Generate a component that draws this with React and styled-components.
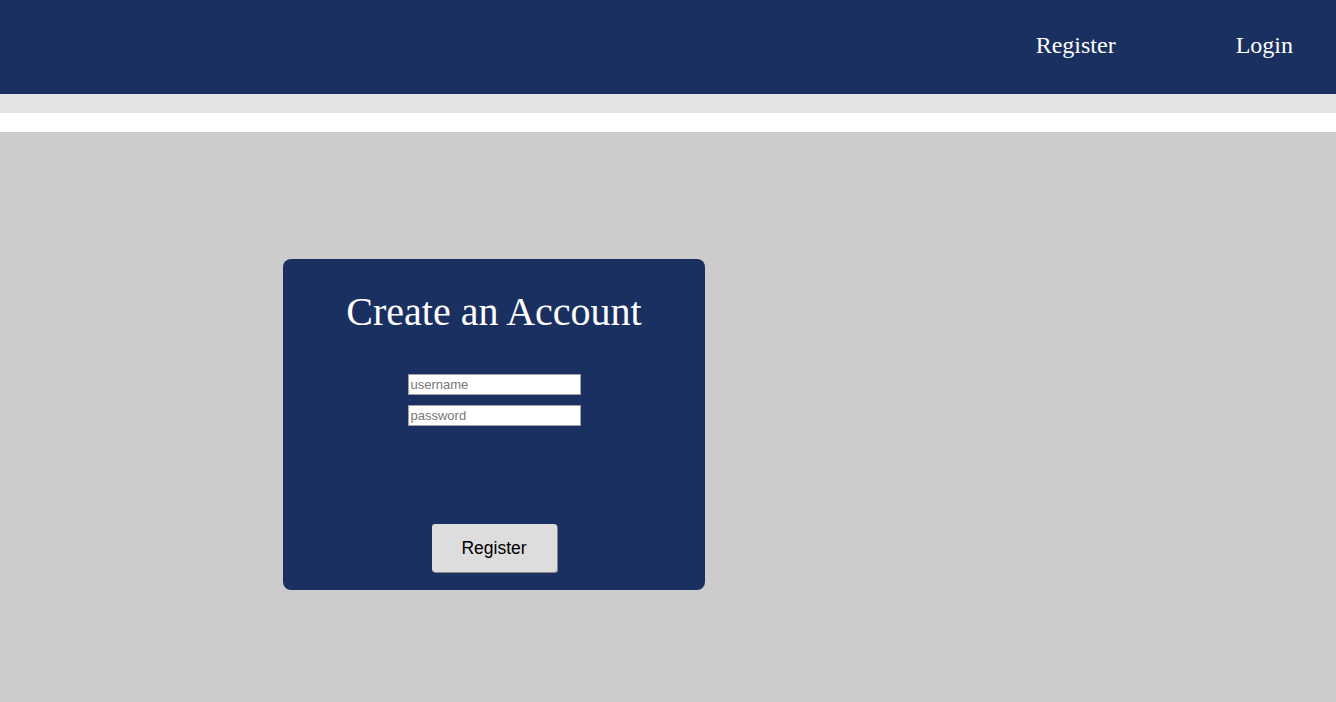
import React from 'react';
import styled, { createGlobalStyle } from 'styled-components';

const GlobalStyle = createGlobalStyle`
  html, body {
    margin: 0;
    padding: 0;
    background: #cccccc;
    font-family: "Liberation Serif", "Times New Roman", serif;
  }
`;

const App = () => {
  return (
    <>
      <GlobalStyle />
      <Header>
        <NavLink>Register</NavLink>
        <NavLink>Login</NavLink>
      </Header>
      <GreyStrip />
      <WhiteStrip />
      <Main>
        <Card>
          <Title>Create an Account</Title>
          <Fields>
            <Input type="text" placeholder="username" />
            <Input type="password" placeholder="password" />
          </Fields>
          <SubmitButton>Register</SubmitButton>
        </Card>
      </Main>
    </>
  );
};

export default App;

const Header = styled.header`
  display: flex;
  justify-content: flex-end;
  align-items: center;
  gap: 120px;
  height: 94px;
  padding: 0 43px 4px 0;
  box-sizing: border-box;
  background: #1a3061;
`;

const NavLink = styled.a`
  color: #ffffff;
  font-size: 24px;
  cursor: pointer;
`;

const GreyStrip = styled.div`
  height: 19px;
  background: #e4e4e4;
`;

const WhiteStrip = styled.div`
  height: 19px;
  background: #ffffff;
`;

const Main = styled.main`
  display: flex;
  min-height: 570px;
  padding: 127px 0 0 283px;
  box-sizing: border-box;
  background: #cccccc;
`;

const Card = styled.section`
  display: flex;
  flex-direction: column;
  align-items: center;
  width: 422px;
  height: 331px;
  padding-top: 30px;
  box-sizing: border-box;
  background: #1a3061;
  border-radius: 8px;
`;

const Title = styled.h2`
  margin: 0;
  color: #ffffff;
  font-size: 40px;
  font-weight: 400;
  line-height: 46px;
`;

const Fields = styled.div`
  display: flex;
  flex-direction: column;
  gap: 10px;
  margin-top: 39px;
`;

const Input = styled.input`
  width: 173px;
  height: 21px;
  box-sizing: border-box;
  padding: 1px 2px;
  border: 1px solid #a0a0a0;
  background: #ffffff;
  font-family: "Liberation Sans", Arial, sans-serif;
  font-size: 13px;
  outline: none;

  &::placeholder {
    color: #777777;
  }
`;

const SubmitButton = styled.button`
  margin-top: 98px;
  width: 125px;
  height: 48px;
  border: none;
  border-radius: 3px;
  background: #dddddd;
  box-shadow: 1px 1px 0 #888888;
  color: #000000;
  font-family: "Liberation Sans", Arial, sans-serif;
  font-size: 17.5px;
  cursor: pointer;
`;
